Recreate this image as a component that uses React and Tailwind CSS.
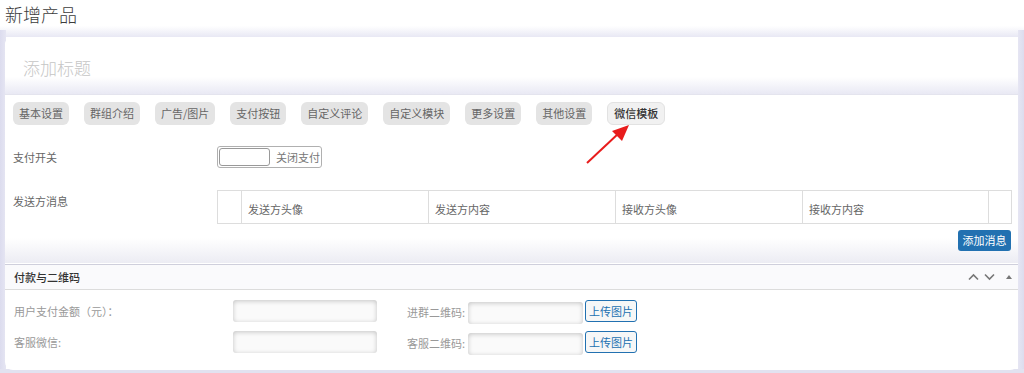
import React from "react";

const tabs = ["基本设置", "群组介绍", "广告/图片", "支付按钮", "自定义评论", "自定义模块", "更多设置", "其他设置"];

export default function App() {
  return (
    <div
      className="relative w-[1024px] h-[373px] overflow-hidden bg-white"
      style={{ fontFamily: '"Noto Sans CJK SC", "Noto Sans", sans-serif' }}
    >
      <div className="h-[37px] bg-gradient-to-b from-white from-70% to-[#e8e8f4] pl-[5px] pt-[1px] text-[18px] leading-[26px] text-[#3c3c3c] font-light">
        新增产品
      </div>
      <div className="absolute left-0 top-[30px] bottom-0 w-[6px] bg-gradient-to-r from-[#dcdcee] to-[#e6e6f3]" />
      <div className="absolute right-0 top-[30px] bottom-0 w-[6px] bg-gradient-to-l from-[#dcdcee] to-[#e6e6f3]" />
      <div className="absolute left-0 right-0 bottom-0 h-[4px] bg-[#e2e2f0]" />

      <div className="relative mx-[5px] w-[1013px] h-[333px] rounded-[8px] bg-white overflow-hidden">
        {/* title */}
        <div className="h-[57px] flex items-center pl-[18px] pt-[5px] text-[17px] font-light text-[#c6c6c6] bg-gradient-to-b from-white from-70% to-[#e9e9f4]">
          添加标题
        </div>

        {/* panel 1 */}
        <div className="h-[169px] bg-gradient-to-b from-white from-85% to-[#ececf3] border-t border-[#e4e4ee]">
          <div className="flex gap-[15px] pl-[8px] pt-[7px]">
            {tabs.map((t) => (
              <div
                key={t}
                className="h-[23px] px-[6px] flex items-center rounded-[6px] bg-[#e4e4e4] text-[11px] text-[#666] whitespace-nowrap"
              >
                {t}
              </div>
            ))}
            <div className="h-[23px] px-[6px] flex items-center rounded-[6px] bg-[#f1f1f1] border border-[#e2e2e2] text-[11px] font-medium text-[#333] whitespace-nowrap">
              微信模板
            </div>
          </div>

          <div className="flex items-center mt-[21px] h-[22px]">
            <div className="w-[212px] pl-[8px] text-[11px] text-[#666]">支付开关</div>
            <div className="w-[105px] h-[22px] rounded-[3px] border border-[#b0b0b0] flex items-center px-[1px]">
              <div className="w-[51px] h-[18px] rounded-[3px] border border-[#999] bg-white" />
              <div className="ml-[6px] text-[11px] text-[#777]">关闭支付</div>
            </div>
          </div>

          <div className="flex mt-[22px]">
            <div className="w-[212px] pl-[8px] pt-[3px] text-[11px] text-[#666]">发送方消息</div>
            <div className="flex w-[795px] h-[34px] border border-[#ddd] text-[11px] text-[#666]">
              <div className="w-[24px] border-r border-[#ddd]" />
              <div className="w-[187px] border-r border-[#ddd] pl-[6px] pt-[10px]">发送方头像</div>
              <div className="w-[187px] border-r border-[#ddd] pl-[6px] pt-[10px]">发送方内容</div>
              <div className="w-[187px] border-r border-[#ddd] pl-[6px] pt-[10px]">接收方头像</div>
              <div className="w-[186px] border-r border-[#ddd] pl-[6px] pt-[10px]">接收方内容</div>
              <div className="flex-1" />
            </div>
          </div>
          <div className="flex justify-end pr-[7px] mt-[6px]">
            <div className="w-[53px] h-[21px] rounded-[3px] bg-[#2271b1] text-white text-[11px] flex items-center justify-center">
              添加消息
            </div>
          </div>
        </div>

        {/* panel 2 */}
        <div className="border-t border-[#cfcfdc] mt-[1px]">
          <div className="h-[25px] flex items-center justify-between pl-[9px] pr-[4px] bg-[#fafafc] border-b border-[#dcdcdc]">
            <div className="text-[11px] font-medium text-[#333]">付款与二维码</div>
            <div className="flex items-center gap-[5px] text-[#777]">
              <svg width="11" height="8" viewBox="0 0 11 8"><path d="M1 6.5 L5.5 2 L10 6.5" fill="none" stroke="#777" strokeWidth="1.6" /></svg>
              <svg width="11" height="8" viewBox="0 0 11 8"><path d="M1 1.5 L5.5 6 L10 1.5" fill="none" stroke="#777" strokeWidth="1.6" /></svg>
              <svg width="10" height="8" viewBox="0 0 10 8" className="ml-[4px]"><path d="M5 2 L8 6 L2 6 Z" fill="#777" /></svg>
            </div>
          </div>
          <div className="pt-[9px]">
            {[
              ["用户支付金额（元）：", "进群二维码:"],
              ["客服微信:", "客服二维码:"],
            ].map(([a, b], i) => (
              <div key={a} className={"flex items-center h-[24px] " + (i ? "mt-[7px]" : "")}>
                <div className="w-[228px] pl-[9px] text-[11px] text-[#999]">{a}</div>
                <div className="w-[144px] h-[22px] rounded-[3px] bg-[#fafafa] shadow-[inset_0_1px_5px_rgba(0,0,0,0.22)]" />
                <div className="w-[91px] pr-[3px] text-right text-[11px] text-[#999] pt-[3px]">{b}</div>
                <div className="w-[115px] h-[22px] mt-[3px] rounded-[3px] bg-[#fafafa] shadow-[inset_0_1px_5px_rgba(0,0,0,0.22)]" />
                <div className="ml-[2px] w-[52px] h-[22px] rounded-[3px] border border-[#2271b1] bg-[#f6f7f7] text-[#2271b1] text-[11px] flex items-center justify-center">
                  上传图片
                </div>
              </div>
            ))}
          </div>
        </div>
      </div>

      {/* red arrow */}
      <svg className="absolute left-0 top-0 pointer-events-none" width="1024" height="373">
        <line x1="587" y1="163" x2="619" y2="133" stroke="#e81c1c" strokeWidth="2" />
        <path d="M629 125 L612 131 L622 141 Z" fill="#e81c1c" />
      </svg>
    </div>
  );
}
